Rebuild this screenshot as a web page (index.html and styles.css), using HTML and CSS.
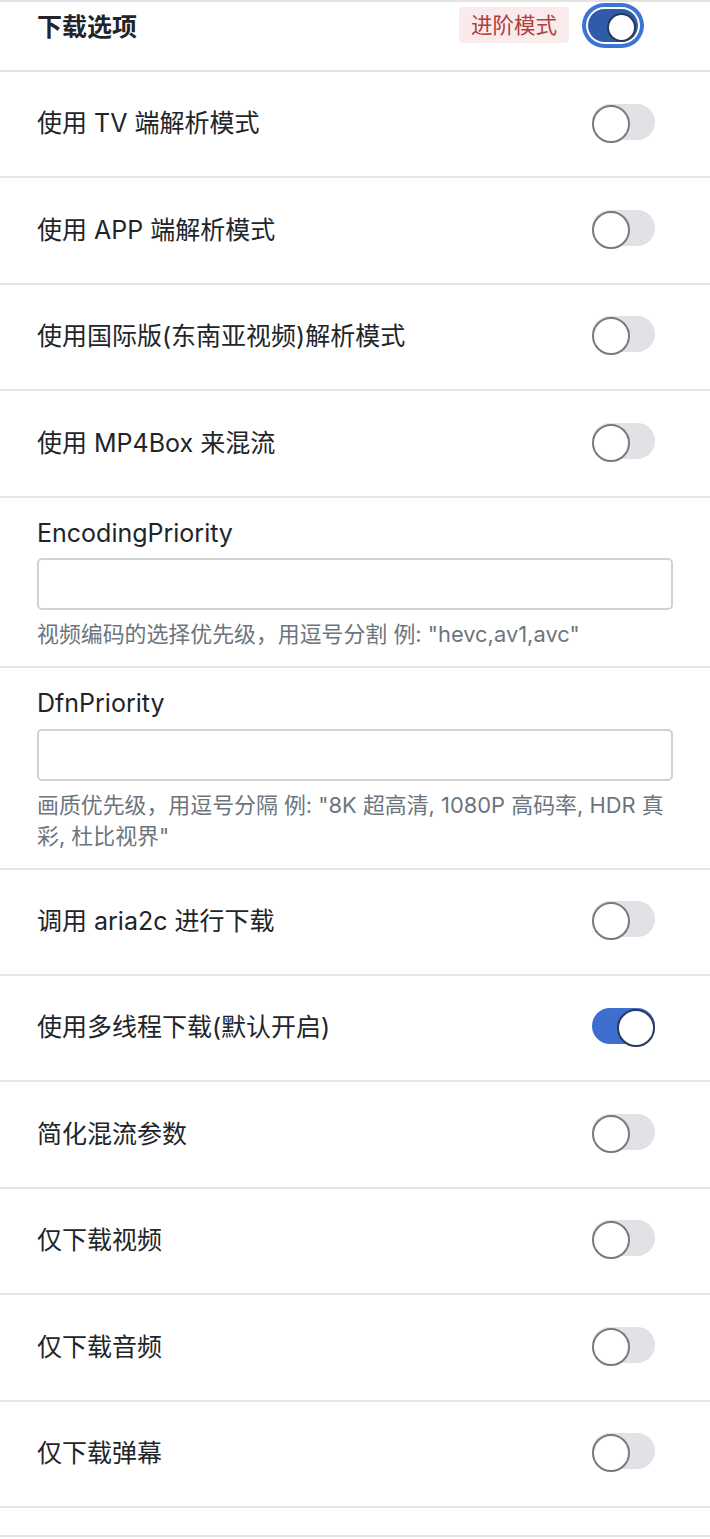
FILE: index.html
```html
<!DOCTYPE html>
<html lang="zh-CN">
<head>
<meta charset="utf-8">
<title>下载选项</title>
<link rel="stylesheet" href="styles.css">
</head>
<body>
<div class="panel">
  <div class="header">
    <span class="title">下载选项</span>
    <div class="header-actions">
      <span class="badge">进阶模式</span>
      <span class="switch switch-focus on"></span>
    </div>
  </div>

  <div class="row"><span class="label">使用 TV 端解析模式</span><span class="switch"></span></div>
  <div class="row"><span class="label">使用 APP 端解析模式</span><span class="switch"></span></div>
  <div class="row"><span class="label">使用国际版(东南亚视频)解析模式</span><span class="switch"></span></div>
  <div class="row"><span class="label">使用 MP4Box 来混流</span><span class="switch"></span></div>

  <div class="field field-enc">
    <div class="field-label">EncodingPriority</div>
    <div class="input"></div>
    <div class="help">视频编码的选择优先级，用逗号分割 例: "hevc,av1,avc"</div>
  </div>

  <div class="field field-dfn">
    <div class="field-label">DfnPriority</div>
    <div class="input"></div>
    <div class="help">画质优先级，用逗号分隔 例: "8K 超高清, 1080P 高码率, HDR 真彩, 杜比视界"</div>
  </div>

  <div class="row"><span class="label">调用 aria2c 进行下载</span><span class="switch"></span></div>
  <div class="row"><span class="label">使用多线程下载(默认开启)</span><span class="switch on"></span></div>
  <div class="row"><span class="label">简化混流参数</span><span class="switch"></span></div>
  <div class="row"><span class="label">仅下载视频</span><span class="switch"></span></div>
  <div class="row"><span class="label">仅下载音频</span><span class="switch"></span></div>
  <div class="row"><span class="label">仅下载弹幕</span><span class="switch"></span></div>
  <div class="footer"></div>
</div>
</body>
</html>
```

FILE: styles.css
```css
* { box-sizing: border-box; }

html, body {
  margin: 0;
  padding: 0;
  background: #ffffff;
}

body {
  font-family: "Inter", "Noto Sans CJK SC", sans-serif;
  font-size: 25px;
  color: #212529;
  line-height: 1.5;
}

.panel {
  width: 710px;
  border-top: 2px solid #e3e3e3;
}

.header {
  height: 70px;
  display: flex;
  justify-content: space-between;
  align-items: flex-start;
  padding: 5px 72px 0 37px;
  border-bottom: 2px solid #e3e3e3;
}

.title {
  font-weight: 700;
  font-size: 25px;
  line-height: 40px;
}

.header-actions {
  display: flex;
  align-items: center;
  gap: 19px;
}

.badge {
  display: inline-block;
  height: 36px;
  line-height: 36px;
  padding: 0 12px;
  font-size: 21.5px;
  color: #b0403e;
  background: #f9ebeb;
  border-radius: 4px;
}

.row {
  height: 106.4px;
  display: flex;
  justify-content: space-between;
  align-items: center;
  padding: 0 55px 0 37px;
  border-bottom: 2px solid #e6e6e6;
}

.label {
  font-size: 25px;
}

.switch {
  position: relative;
  display: block;
  width: 63px;
  height: 36px;
  border-radius: 18px;
  background: #e1e1e6;
  margin-bottom: 5px;
}

.switch::after {
  content: "";
  position: absolute;
  top: 1px;
  left: 0;
  width: 34px;
  height: 34px;
  border-radius: 50%;
  background: #ffffff;
  border: 2px solid #7a7a7a;
}

.switch.on {
  background: #3e6fce;
}

.switch.on::after {
  left: auto;
  right: 0;
  border-color: #27395c;
}

.switch-focus {
  width: 50px;
  height: 33px;
  border-radius: 17px;
  margin-bottom: 0;
  box-shadow: 0 0 0 2px #ffffff, 0 0 0 6px #3c74d4;
}

.switch-focus.on {
  background: #2f5ba9;
}

.switch-focus.on::after {
  top: 4px;
  right: 2px;
  width: 25px;
  height: 25px;
}

.field {
  padding: 17px 37px 16px 37px;
  border-bottom: 2px solid #e6e6e6;
}

.field-label {
  font-size: 25px;
  margin-bottom: 6px;
}

.input {
  height: 52px;
  border: 2px solid #d2d2d2;
  border-radius: 5px;
  background: #ffffff;
}

.help {
  margin-top: 9px;
  font-size: 21.9px;
  line-height: 31px;
  color: #6c757d;
}

.footer {
  height: 29px;
  border-bottom: 2px solid #e3e3e3;
}
```
